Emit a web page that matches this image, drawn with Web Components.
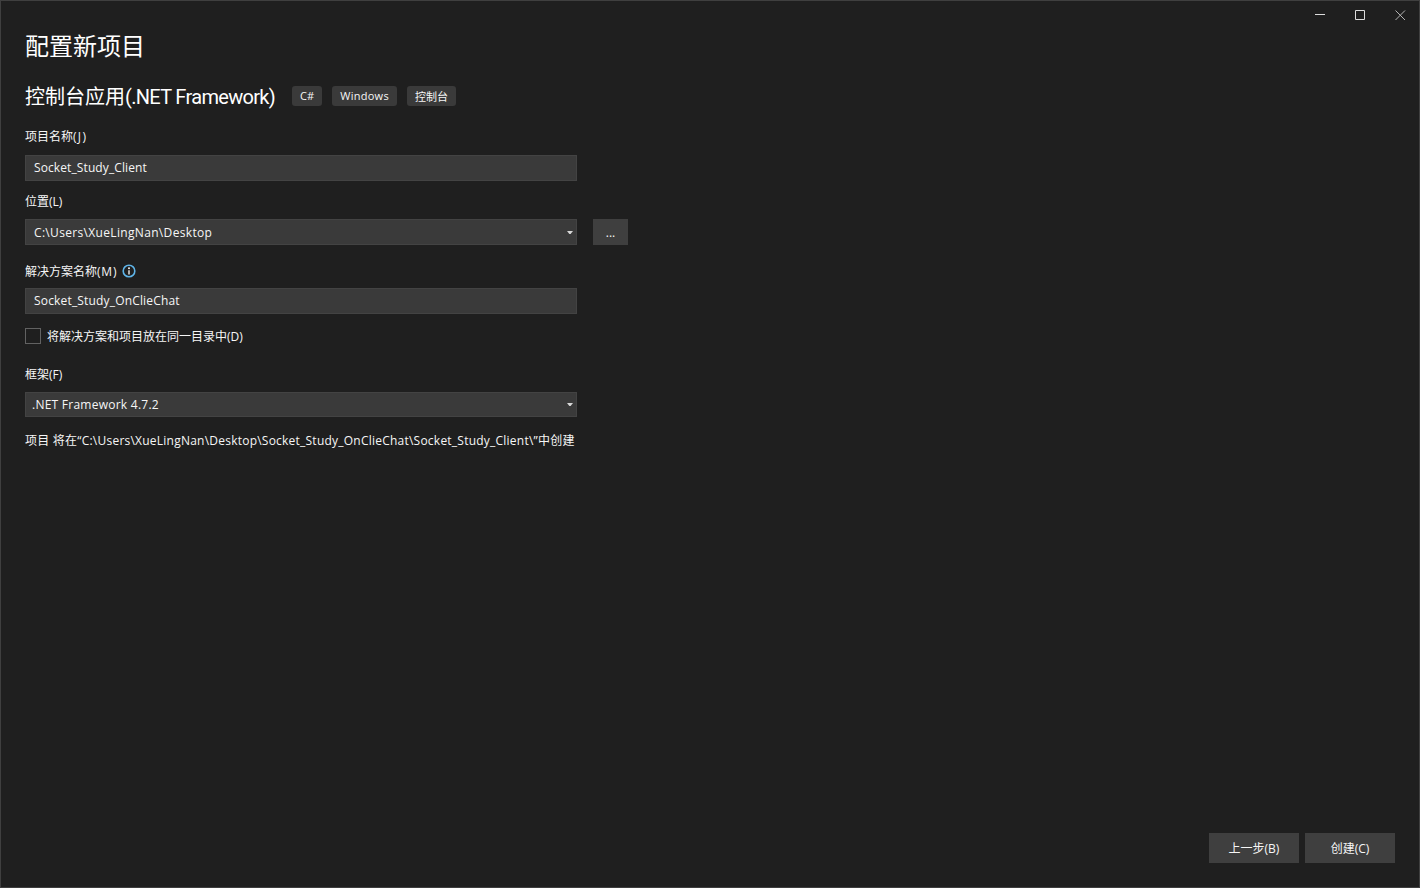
<!DOCTYPE html>
<html lang="zh-CN">
<head>
<meta charset="utf-8">
<title>配置新项目</title>
<style>
  html, body { margin: 0; height: 100%; background: #1f1f1f; }
  body { font: 12px "Open Sans", "Noto Sans CJK SC", sans-serif; color: #f6f6f6; }
</style>
</head>
<body>
<vs-window>
  <vs-titlebar slot="bar"></vs-titlebar>
  <vs-heading>配置新项目</vs-heading>
  <vs-subheading>
    控制台应用<span style="letter-spacing:-.68px">(.NET Framework)</span>
    <vs-tag slot="tags" style="width:30px">C#</vs-tag>
    <vs-tag slot="tags" style="width:65px;letter-spacing:.25px">Windows</vs-tag>
    <vs-tag slot="tags" style="width:49px">控制台</vs-tag>
  </vs-subheading>

  <vs-label style="margin-top:21px">项目名称<span style="letter-spacing:1.3px">(J)</span></vs-label>
  <vs-field style="margin-top:10px;letter-spacing:.1px">Socket_Study_Client</vs-field>

  <vs-label style="margin-top:11px">位置(L)</vs-label>
  <div style="display:flex;gap:16px;margin-top:9px">
    <vs-field dropdown style="letter-spacing:.33px">C:\Users\XueLingNan\Desktop</vs-field>
    <vs-button style="width:35px;height:26px">...</vs-button>
  </div>

  <vs-label info style="margin-top:17px">解决方案名称<span style="letter-spacing:.8px">(M)</span></vs-label>
  <vs-field style="margin-top:8px;letter-spacing:.17px">Socket_Study_OnClieChat</vs-field>

  <vs-checkbox style="margin-top:14px">将解决方案和项目放在同一目录中(D)</vs-checkbox>

  <vs-label style="margin-top:21px">框架(F)</vs-label>
  <vs-field dropdown compact style="margin-top:9px;letter-spacing:.25px">.NET Framework 4.7.2</vs-field>

  <vs-label style="margin-top:14px;letter-spacing:.23px">项目 将在“C:\Users\XueLingNan\Desktop\Socket_Study_OnClieChat\Socket_Study_Client\”中创建</vs-label>

  <vs-button slot="footer" style="width:90px;height:30px">上一步(B)</vs-button>
  <vs-button slot="footer" style="width:90px;height:30px">创建(C)</vs-button>
</vs-window>

<script>
// Crea un shadow root abierto con el html indicado
const shadow = (el, html) => {
  el.attachShadow({ mode: "open" }).innerHTML = html;
};

class VsWindow extends HTMLElement {
  constructor() {
    super();
    shadow(this, `
      <style>
        :host { display: flex; flex-direction: column; box-sizing: border-box; height: 888px; border: 1px solid #3f3f3f; background: #1f1f1f; }
        main { display: flex; flex-direction: column; padding: 0 24px; flex: 1; }
        footer { display: flex; justify-content: flex-end; gap: 6px; padding: 0 24px 24px 0; }
      </style>
      <slot name="bar"></slot>
      <main><slot></slot></main>
      <footer><slot name="footer"></slot></footer>`);
  }
}

class VsTitlebar extends HTMLElement {
  constructor() {
    super();
    shadow(this, `
      <style>
        :host { display: flex; justify-content: flex-end; height: 29px; }
        svg { width: 40px; height: 29px; fill: none; stroke: #dcdcdc; stroke-width: 1; }
      </style>
      <svg viewBox="0 0 40 29"><path d="M16 13.5h10"/></svg>
      <svg viewBox="0 0 40 29"><path d="M16.5 9.5h9v9h-9z"/></svg>
      <svg viewBox="0 0 40 29"><path d="M16.5 9.5l9.5 9.5M26 9.5l-9.5 9.5" stroke="#b4b4b4"/></svg>`);
  }
}

class VsHeading extends HTMLElement {
  constructor() {
    super();
    shadow(this, `
      <style>:host { display: block; font-size: 24px; line-height: 32px; color: #fff; }</style>
      <slot></slot>`);
  }
}

class VsSubheading extends HTMLElement {
  constructor() {
    super();
    shadow(this, `
      <style>
        :host { display: flex; align-items: center; height: 20px; margin-top: 24px; font: 20px Roboto, "Noto Sans CJK SC", sans-serif; color: #fff; white-space: nowrap; }
        span { position: relative; top: -1px; }
        div { display: flex; gap: 10px; margin-left: 17px; font: 11px "Open Sans", "Noto Sans CJK SC", sans-serif; }
      </style>
      <span><slot></slot></span>
      <div><slot name="tags"></slot></div>`);
  }
}

class VsTag extends HTMLElement {
  constructor() {
    super();
    shadow(this, `
      <style>
        :host { display: flex; align-items: center; justify-content: center; box-sizing: border-box; height: 20px; padding-bottom: 1px; background: #3a3a3a; border-radius: 3px; color: #f6f6f6; }
      </style>
      <slot></slot>`);
  }
}

class VsLabel extends HTMLElement {
  constructor() {
    super();
    const info = this.hasAttribute("info") ? `
      <svg viewBox="0 0 14 14" width="14" height="14">
        <circle cx="7" cy="7" r="5.8" fill="none" stroke="#5fb4e8" stroke-width="1.6"/>
        <path d="M7 6.2v4.2" fill="none" stroke="#f0f0f0" stroke-width="1.4"/>
        <circle cx="7" cy="4.2" r="1" fill="#f0f0f0"/>
      </svg>` : "";
    shadow(this, `
      <style>
        :host { display: flex; align-items: center; gap: 5px; height: 18px; font-size: 12px; color: #f6f6f6; white-space: nowrap; }
      </style>
      <span><slot></slot></span>${info}`);
  }
}

class VsField extends HTMLElement {
  constructor() {
    super();
    const arrow = this.hasAttribute("dropdown")
      ? `<svg viewBox="0 0 6 3" width="6" height="3"><path d="M0 0h6L3.6 3H2.4z" fill="#d8d8d8"/></svg>` : "";
    shadow(this, `
      <style>
        :host { display: flex; align-items: center; justify-content: space-between; box-sizing: border-box; width: 552px; height: 26px; padding: 0 3px 0 8px; background: #3a3a3a; border: 1px solid #434343; font-size: 12px; color: #f6f6f6; white-space: nowrap; }
        :host(:not([dropdown])) span { position: relative; top: -1px; }
        :host([compact]) { height: 25px; padding-left: 6px; }
      </style>
      <span><slot></slot></span>${arrow}`);
  }
}

class VsButton extends HTMLElement {
  constructor() {
    super();
    shadow(this, `
      <style>
        :host { display: flex; align-items: center; justify-content: center; background: #3f3f3f; font-size: 12px; color: #f6f6f6; }
      </style>
      <slot></slot>`);
  }
}

class VsCheckbox extends HTMLElement {
  constructor() {
    super();
    shadow(this, `
      <style>
        :host { display: flex; align-items: center; gap: 6px; height: 16px; font-size: 12px; color: #f6f6f6; white-space: nowrap; }
        i { box-sizing: border-box; width: 16px; height: 16px; background: #1f1f1f; border: 1px solid #626262; }
      </style>
      <i></i><span><slot></slot></span>`);
  }
}

customElements.define("vs-window", VsWindow);
customElements.define("vs-titlebar", VsTitlebar);
customElements.define("vs-heading", VsHeading);
customElements.define("vs-subheading", VsSubheading);
customElements.define("vs-tag", VsTag);
customElements.define("vs-label", VsLabel);
customElements.define("vs-field", VsField);
customElements.define("vs-button", VsButton);
customElements.define("vs-checkbox", VsCheckbox);
</script>
</body>
</html>
